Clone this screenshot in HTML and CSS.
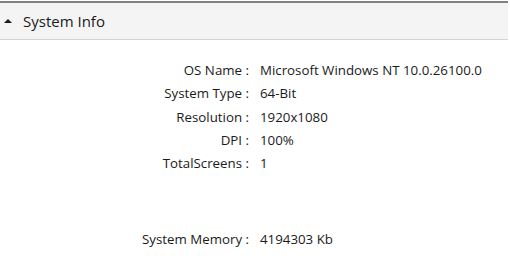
FILE: index.html
```
<!DOCTYPE html>
<html lang="en">

<head>
	<meta charset="utf-8">
	<title>System Info</title>
	<link rel="stylesheet" href="styles.css">
</head>

<body>
	<section class="panel">
		<header class="panel-head">
			<span class="caret"></span>
			<span class="title">System Info</span>
		</header>

		<div class="info">
			<div class="label">OS Name :</div>
			<div class="value">Microsoft Windows NT 10.0.26100.0</div>
			<div class="label">System Type :</div>
			<div class="value">64-Bit</div>
			<div class="label">Resolution :</div>
			<div class="value">1920x1080</div>
			<div class="label">DPI :</div>
			<div class="value">100%</div>
			<div class="label">TotalScreens :</div>
			<div class="value">1</div>
			<div class="label spaced">System Memory :</div>
			<div class="value spaced">4194303 Kb</div>
		</div>
	</section>
</body>

</html>
```

FILE: styles.css
```
body {
	margin: 0;
	background-color: white;
	font-family: 'Open Sans', 'Noto Sans', sans-serif;
	color: #1a1a1a;
}

/*____________________Panel____________________*/

.panel {
	width: 508px;
	margin-top: 1px;
}

.panel-head {
	display: flex;
	align-items: center;
	height: 36px;
	border-top: 2px solid #808080;
	border-bottom: 1px solid #d4d4d4;
	background-color: #f4f4f4;
	padding-left: 4px;
}

.caret {
	width: 0;
	height: 0;
	border-left: 4px solid transparent;
	border-right: 4px solid transparent;
	border-bottom: 4px solid #1a1a1a;
	margin-right: 11px;
}

.title {
	font-size: 15px;
	margin-top: -1px;
}

/*____________________Info rows____________________*/

.info {
	display: grid;
	grid-template-columns: 249px auto;
	column-gap: 11px;
	row-gap: 5px;
	padding-top: 21px;
	font-size: 13.3px;
	line-height: 18.3px;
}

.label {
	text-align: right;
}

.spaced {
	margin-top: 53px;
}
```
